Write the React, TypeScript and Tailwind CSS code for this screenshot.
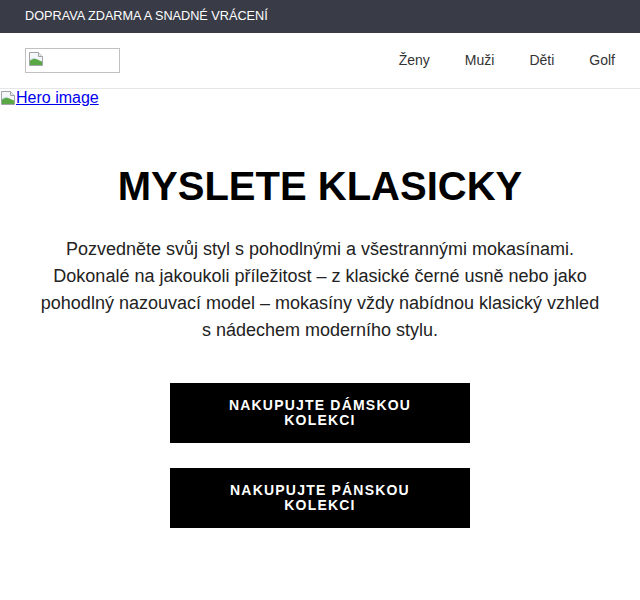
import React from "react";

function BrokenImage() {
  return (
    <svg width="16" height="16" viewBox="0 0 16 16" className="shrink-0">
      <path d="M1.5 1.5h9l4 4v9h-13z" fill="#f4f6f8" stroke="#a0a4a8" />
      <path d="M10.5 1.5v4h4" fill="#e6e8ea" stroke="#a0a4a8" />
      <path d="M2 14V9.5c2-1.5 4-2.2 6-1.6 2 .6 4 2 6 2.6V14z" fill="#5aa845" />
      <path d="M2 9c2-1.4 4-2 6-1.5" stroke="#c8dceb" fill="none" />
    </svg>
  );
}

export default function App() {
  return (
    <div className="min-h-[600px] bg-white font-['Liberation_Sans',Arial,sans-serif]">
      <div className="h-[33px] bg-[#393c47] flex items-center px-[25px]">
        <span className="text-[12.7px] text-white">DOPRAVA ZDARMA A SNADNÉ VRÁCENÍ</span>
      </div>
      <header className="h-[56px] border-b border-[#e6e6e6] flex items-center justify-between pl-[25px] pr-[25px]">
        <div className="w-[95px] h-[25px] border border-[#c0c0c0] flex items-start p-[2px]">
          <BrokenImage />
        </div>
        <nav className="flex items-center gap-[35px] text-[14px] text-[#333]">
          <a>Ženy</a>
          <a>Muži</a>
          <a>Děti</a>
          <a>Golf</a>
        </nav>
      </header>
      <a className="inline-flex items-end text-[16px] leading-[16px] text-[#0000ee] underline h-[16px]">
        <BrokenImage />
        <span>Hero image</span>
      </a>
      <section className="px-[40px] pt-[50px] flex flex-col items-center text-center">
        <h1 className="text-[40px] leading-[46px] font-bold text-black">MYSLETE KLASICKY</h1>
        <p className="mt-[27px] text-[18px] leading-[27px] text-[#222]">
          Pozvedněte svůj styl s pohodlnými a všestrannými mokasínami. Dokonalé na jakoukoli příležitost – z klasické černé usně nebo jako pohodlný nazouvací model – mokasíny vždy nabídnou klasický vzhled s nádechem moderního stylu.
        </p>
        <div className="mt-[39px] flex flex-col gap-[25px]">
          <button className="w-[300px] h-[60px] bg-black text-white text-[14px] leading-[15px] font-bold tracking-[1.2px] px-[50px]">
            NAKUPUJTE DÁMSKOU KOLEKCI
          </button>
          <button className="w-[300px] h-[60px] bg-black text-white text-[14px] leading-[15px] font-bold tracking-[1.2px] px-[50px]">
            NAKUPUJTE PÁNSKOU KOLEKCI
          </button>
        </div>
      </section>
    </div>
  );
}
